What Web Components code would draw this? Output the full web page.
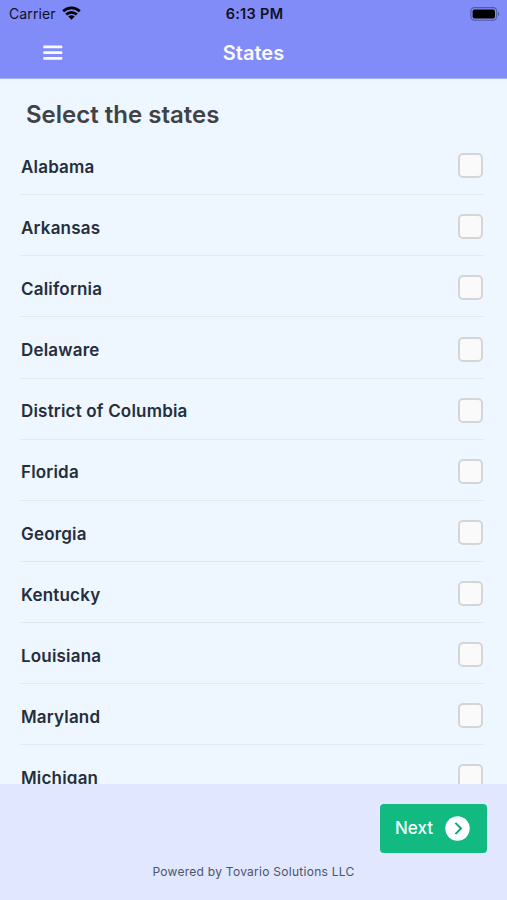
<!DOCTYPE html>
<html lang="en">
<head>
<meta charset="utf-8">
<title>States</title>
<style>
    html, body {
        margin: 0;
        height: 100%;
        overflow: hidden;
        font-family: Inter, "Liberation Sans", sans-serif;
    }
</style>
</head>
<body>
<states-screen></states-screen>

<script>
// Carrier, clock and battery
class StatusBar extends HTMLElement {
    constructor() {
        super();
        this.attachShadow({mode: 'open'});
        this.shadowRoot.innerHTML =
        `<style>
            :host {
                display: grid;
                grid-template-columns: 1fr auto 1fr;
                align-items: center;
                height: 27px;
                padding: 0 7px 0 9px;
                color: #10101f;
                font-size: 14px;
                line-height: 27px;
            }
            .carrier { display: flex; align-items: center; gap: 6px; }
            .carrier span { letter-spacing: 0.12px; }
            .time { font-size: 14.5px; font-weight: 600; letter-spacing: 0.3px; }
            .battery { justify-self: end; }
            svg { display: block; }
            .carrier svg { margin-top: -2px; }
        </style>
        <div class="carrier">
            <span>${this.getAttribute('carrier')}</span>
            <svg width="19" height="14" viewBox="0 0 19 14" fill="none" stroke="#000" stroke-width="2.7">
                <path d="M1.2 5.3a11.8 11.8 0 0 1 16.6 0"/>
                <path d="M4.2 8.5a7.5 7.5 0 0 1 10.6 0"/>
                <path d="M9.5 13.8L6.3 10.6a4.5 4.5 0 0 1 6.4 0z" fill="#000" stroke="none"/>
            </svg>
        </div>
        <div class="time">${this.getAttribute('time')}</div>
        <svg class="battery" width="30" height="14" viewBox="0 0 30 14">
            <rect x="0.9" y="0.6" width="25.8" height="12.6" rx="3.6" fill="none" stroke="#5359a2" stroke-width="1.1"/>
            <rect x="2.6" y="2.4" width="22.4" height="9" rx="2" fill="#000"/>
            <path d="M28 4.7a2.5 2.5 0 0 1 0 4.4z" fill="#5359a2"/>
        </svg>`;
    }
}

// Title bar with the menu button
class NavBar extends HTMLElement {
    constructor() {
        super();
        this.attachShadow({mode: 'open'});
        this.shadowRoot.innerHTML =
        `<style>
            :host {
                display: grid;
                grid-template-columns: 1fr auto 1fr;
                align-items: center;
                height: 51px;
                padding: 0 43px;
                color: #fafaff;
                font-size: 20px;
                font-weight: 600;
                line-height: 52px;
            }
            svg { display: block; }
        </style>
        <svg width="20" height="16" viewBox="0 0 20 16" fill="#fafaff">
            <rect x="0.3" y="0.5" width="19" height="2.8" rx="0.6"/>
            <rect x="0.3" y="6.2" width="19" height="2.8" rx="0.6"/>
            <rect x="0.3" y="11.9" width="19" height="2.8" rx="0.6"/>
        </svg>
        <slot></slot>`;
    }
}

class StateRow extends HTMLElement {
    constructor() {
        super();
        this.attachShadow({mode: 'open'});
        this.shadowRoot.innerHTML =
        `<style>
            :host {
                display: flex;
                flex: none;
                box-sizing: border-box;
                align-items: center;
                justify-content: space-between;
                height: 61.07px;
                padding: 3px 0 0 1px;
                border-bottom: 1px solid #e3e9f2;
                color: #252e3c;
                font-size: 17px;
                font-weight: 600;
                letter-spacing: 0.19px;
                line-height: 24px;
            }
            .label { padding-top: 2.6px; }
            .box {
                box-sizing: border-box;
                width: 25px;
                height: 25px;
                margin-right: 1px;
                border: 2px solid #d4d5d7;
                border-radius: 5px;
                background: #fafafa;
            }
        </style>
        <div class="label"><slot></slot></div>
        <div class="box" role="checkbox" aria-checked="false"></div>`;
    }
}

class NextButton extends HTMLElement {
    constructor() {
        super();
        this.attachShadow({mode: 'open'});
        this.shadowRoot.innerHTML =
        `<style>
            :host {
                display: flex;
                box-sizing: border-box;
                align-items: center;
                justify-content: space-between;
                width: 107px;
                height: 49px;
                padding: 0 17.5px 1px 15px;
                border-radius: 4px;
                background: #12b981;
                color: #f5fffb;
                font-size: 17px;
                font-weight: 500;
            }
            svg { display: block; }
        </style>
        <slot></slot>
        <svg width="25" height="25" viewBox="0 0 25 25">
            <circle cx="12.5" cy="12.5" r="12.2" fill="#fff"/>
            <path d="M10.4 6.9l5.6 5.6-5.6 5.6" fill="none" stroke="#12a575" stroke-width="2"/>
        </svg>`;
    }
}

class StatesScreen extends HTMLElement {
    constructor() {
        super();
        const states = ['Alabama', 'Arkansas', 'California', 'Delaware', 'District of Columbia',
            'Florida', 'Georgia', 'Kentucky', 'Louisiana', 'Maryland', 'Michigan'];
        const rows = states.map(state => `<state-row>${state}</state-row>`).join('');

        this.attachShadow({mode: 'open'});
        this.shadowRoot.innerHTML =
        `<style>
            :host {
                display: flex;
                flex-direction: column;
                height: 100vh;
                background: #eef6ff;
            }
            header {
                flex: none;
                height: 79px;
                background: #818cf8;
                box-sizing: border-box;
                border-bottom: 1px solid #a3b1f9;
            }
            main {
                display: flex;
                flex: 1;
                flex-direction: column;
                min-height: 0;
                overflow: hidden;
                padding: 0 23px 0 20px;
            }
            h1 {
                flex: none;
                margin: 0;
                padding: 20px 6px 0;
                height: 35.3px;
                color: #404247;
                font-size: 24px;
                font-weight: 600;
                line-height: 32px;
            }
            footer {
                display: flex;
                flex: none;
                flex-direction: column;
                box-sizing: border-box;
                height: 116px;
                padding: 20px 20px 0;
                background: #e0e7ff;
            }
            next-button { align-self: flex-end; }
            p {
                margin: 11px 0 0;
                color: #4b5568;
                font-size: 12px;
                letter-spacing: 0.27px;
                line-height: 16px;
                text-align: center;
            }
        </style>
        <header>
            <status-bar carrier="Carrier" time="6:13 PM"></status-bar>
            <nav-bar>States</nav-bar>
        </header>
        <main>
            <h1>Select the states</h1>
            ${rows}
        </main>
        <footer>
            <next-button>Next</next-button>
            <p>Powered by Tovario Solutions LLC</p>
        </footer>`;
    }
}

window.customElements.define('status-bar', StatusBar);
window.customElements.define('nav-bar', NavBar);
window.customElements.define('state-row', StateRow);
window.customElements.define('next-button', NextButton);
window.customElements.define('states-screen', StatesScreen);
</script>
</body>
</html>
